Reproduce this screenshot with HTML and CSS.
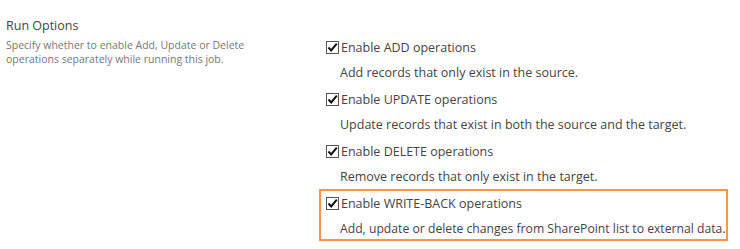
FILE: index.html
```html
<!DOCTYPE html>
<html lang="en">
<head>
  <meta charset="UTF-8">
  <title>Run Options</title>
  <link rel="stylesheet" href="styles.css">
</head>
<body>

  <div class="section">
    <div class="section-info">
      <h3 class="section-title">Run Options</h3>
      <p class="section-desc">Specify whether to enable Add, Update or Delete operations separately while running this job.</p>
    </div>

    <div class="section-body">
      <div class="option">
        <label class="option-label"><span class="check"><svg viewBox="0 0 13 13" width="13" height="13"><path d="M2.5 6.5 L5.2 9.5 L10.8 2.6" fill="none" stroke="#111" stroke-width="2"/></svg></span>Enable ADD operations</label>
        <div class="option-desc">Add records that only exist in the source.</div>
      </div>
      <div class="option">
        <label class="option-label"><span class="check"><svg viewBox="0 0 13 13" width="13" height="13"><path d="M2.5 6.5 L5.2 9.5 L10.8 2.6" fill="none" stroke="#111" stroke-width="2"/></svg></span>Enable UPDATE operations</label>
        <div class="option-desc">Update records that exist in both the source and the target.</div>
      </div>
      <div class="option">
        <label class="option-label"><span class="check"><svg viewBox="0 0 13 13" width="13" height="13"><path d="M2.5 6.5 L5.2 9.5 L10.8 2.6" fill="none" stroke="#111" stroke-width="2"/></svg></span>Enable DELETE operations</label>
        <div class="option-desc">Remove records that only exist in the target.</div>
      </div>
      <div class="option highlight">
        <label class="option-label"><span class="check"><svg viewBox="0 0 13 13" width="13" height="13"><path d="M2.5 6.5 L5.2 9.5 L10.8 2.6" fill="none" stroke="#111" stroke-width="2"/></svg></span>Enable WRITE-BACK operations</label>
        <div class="option-desc long">Add, update or delete changes from SharePoint list to external data.</div>
      </div>
    </div>
  </div>

</body>
</html>
```

FILE: styles.css
```css
body {
  margin: 0;
  font-family: "Open Sans", Arial, sans-serif;
  color: #444;
  background: #fff;
}
.section {
  display: flex;
  padding-top: 17px;
}
.section-info {
  width: 260px;
  padding-left: 6px;
  margin-right: 53px;
}
.section-title {
  margin: 0 0 3px;
  font-size: 12.5px;
  font-weight: normal;
  line-height: 18px;
  color: #444;
}
.section-desc {
  margin: 0;
  font-size: 10.5px;
  line-height: 14px;
  color: #777;
}
.section-body {
  padding-top: 16px;
}
.option {
  padding: 0 5px;
  border: 2px solid transparent;
}
.option-label {
  display: flex;
  align-items: center;
  height: 24px;
  font-size: 12.5px;
}
.check {
  display: inline-flex;
  width: 13px;
  height: 13px;
  box-sizing: border-box;
  border: 1px solid #555;
  margin-right: 2px;
  background: #fff;
}
.check svg {
  margin: -1px;
}
.option-desc {
  height: 24px;
  line-height: 27px;
  font-size: 12.5px;
  padding-left: 14px;
}
.option-desc.long {
  font-size: 12.2px;
}
.highlight {
  border-color: #f79646;
  width: max-content;
  padding-right: 0;
}
```
